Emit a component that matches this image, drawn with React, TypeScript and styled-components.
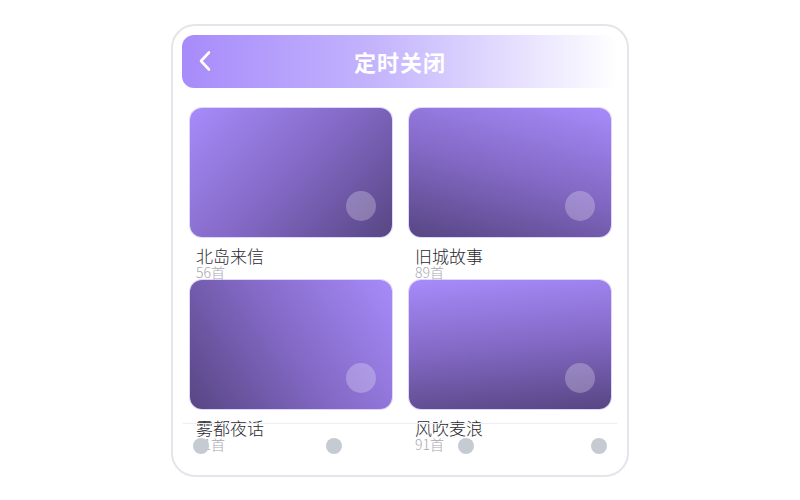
import React from 'react'
import styled, { createGlobalStyle } from 'styled-components'

const GlobalStyle = createGlobalStyle`
  html, body {
    margin: 0;
    padding: 0;
    background: #ffffff;
  }
  body {
    font-family: "Noto Sans", "Noto Sans CJK SC", sans-serif;
  }
`

const Page = styled.div`
  width: 800px;
  height: 500px;
  display: flex;
  align-items: center;
  justify-content: center;
`

const Phone = styled.div`
  position: relative;
  box-sizing: border-box;
  width: 458px;
  height: 453px;
  border: 2px solid #e4e4ea;
  border-radius: 24px;
  padding: 9px;
  background: #fff;
  overflow: hidden;
`

const Header = styled.div`
  position: relative;
  height: 53px;
  border-radius: 12px;
  background: linear-gradient(90deg, #a78bfa 0%, #c4b5fd 45%, #ffffff 100%);
  display: flex;
  align-items: center;
  justify-content: center;
`

const BackButton = styled.button`
  position: absolute;
  left: 16px;
  top: 50%;
  transform: translateY(-50%);
  border: 0;
  background: none;
  padding: 0;
  width: 14px;
  height: 22px;
  display: flex;
  align-items: center;
  justify-content: center;
`

const Title = styled.h1`
  margin: 0;
  color: #ffffff;
  font-size: 22px;
  font-weight: 700;
  font-family: "Noto Sans CJK SC", sans-serif;
  letter-spacing: 1px;
`

const Grid = styled.div`
  display: grid;
  grid-template-columns: 1fr 1fr;
  column-gap: 17px;
  padding: 20px 7px 0 8px;
`

const Item = styled.div`
  display: flex;
  flex-direction: column;
`

const Cover = styled.div<{ $angle: number }>`
  position: relative;
  height: 129px;
  border-radius: 12px;
  background: linear-gradient(${(p) => p.$angle}deg, #a78bfa 0%, #8469c6 50%, #574683 100%);
  box-shadow: 0 0 0 1px rgba(196, 181, 253, 0.55);
`

const PlayDot = styled.span`
  position: absolute;
  right: 16px;
  bottom: 16px;
  width: 30px;
  height: 30px;
  border-radius: 50%;
  background: rgba(255, 255, 255, 0.25);
`

const Name = styled.div`
  margin-top: 10px;
  padding-left: 6px;
  font-family: "Noto Sans CJK SC", sans-serif;
  font-size: 17px;
  font-weight: 300;
  line-height: 18px;
  color: #2a2a30;
`

const Count = styled.div`
  padding-left: 6px;
  font-family: "Noto Sans CJK SC", sans-serif;
  font-size: 14px;
  font-weight: 300;
  line-height: 15px;
  color: #a8a8b0;
`

const BottomBar = styled.div`
  position: absolute;
  left: 10px;
  right: 10px;
  bottom: 7px;
  height: 44px;
  border-top: 1px solid #eeeef2;
  display: flex;
  align-items: center;
  justify-content: space-between;
  padding: 0 10px;
`

const NavDot = styled.span`
  width: 16px;
  height: 16px;
  border-radius: 50%;
  background: #c6cad2;
`

const albums = [
  { name: '北岛来信', count: '56首', angle: 135 },
  { name: '旧城故事', count: '89首', angle: 195 },
  { name: '雾都夜话', count: '41首', angle: 235 },
  { name: '风吹麦浪', count: '91首', angle: 175 },
]

export default function App() {
  return (
    <>
      <GlobalStyle />
      <Page>
        <Phone>
          <Header>
            <BackButton aria-label="back">
              <svg width="14" height="22" viewBox="0 0 14 22" fill="none">
                <polyline
                  points="11,2.5 3,11 11,19.5"
                  stroke="#ffffff"
                  strokeWidth="2.6"
                  strokeLinecap="round"
                  strokeLinejoin="round"
                />
              </svg>
            </BackButton>
            <Title>定时关闭</Title>
          </Header>
          <Grid>
            {albums.map((a) => (
              <Item key={a.name}>
                <Cover $angle={a.angle}>
                  <PlayDot />
                </Cover>
                <Name>{a.name}</Name>
                <Count>{a.count}</Count>
              </Item>
            ))}
          </Grid>
          <BottomBar>
            <NavDot />
            <NavDot />
            <NavDot />
            <NavDot />
          </BottomBar>
        </Phone>
      </Page>
    </>
  )
}
